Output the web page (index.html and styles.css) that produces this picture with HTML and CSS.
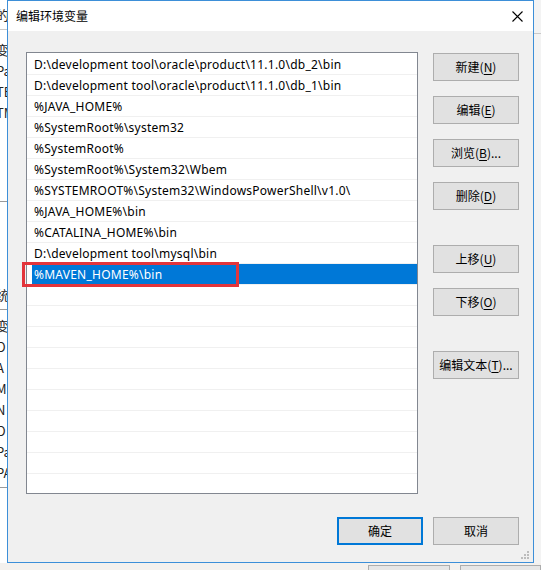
FILE: index.html
```html
<!DOCTYPE html>
<html lang="zh-CN">
<head>
<meta charset="utf-8">
<title>编辑环境变量</title>
<link rel="stylesheet" href="styles.css">
</head>
<body>
<div class="desk">
  <div class="behind-left">
    <div class="bl-inner">
      <div class="frag h30">的</div>
      <div class="frag top10">变</div>
      <div class="frag">Pa</div>
      <div class="frag">TE</div>
      <div class="frag">TM</div>
      <div class="spacer s1"></div>
      <div class="frag top82">统</div>
      <div class="rule"></div>
      <div class="frag">变</div>
      <div class="frag">O</div>
      <div class="frag">A</div>
      <div class="frag">M</div>
      <div class="frag">N</div>
      <div class="frag">O</div>
      <div class="frag">Pa</div>
      <div class="frag">PA</div>
      <div class="rule"></div>
    </div>
  </div>
  <div class="behind-right"><div class="br-line"></div></div>
  <div class="behind-bottom">
    <div class="bb-btn"></div>
    <div class="bb-btn"></div>
  </div>

  <div class="dialog">
    <div class="titlebar">
      <span class="title">编辑环境变量</span>
      <svg class="close" width="11" height="11" viewBox="0 0 11 11"><path d="M0.5 0.5 L10.5 10.5 M10.5 0.5 L0.5 10.5" stroke="#000" stroke-width="1.1" fill="none"/></svg>
    </div>
    <div class="body">
      <div class="main">
        <div class="list">
          <div class="row">D:\development tool\oracle\product\11.1.0\db_2\bin</div>
          <div class="row">D:\development tool\oracle\product\11.1.0\db_1\bin</div>
          <div class="row">%JAVA_HOME%</div>
          <div class="row">%SystemRoot%\system32</div>
          <div class="row">%SystemRoot%</div>
          <div class="row">%SystemRoot%\System32\Wbem</div>
          <div class="row">%SYSTEMROOT%\System32\WindowsPowerShell\v1.0\</div>
          <div class="row">%JAVA_HOME%\bin</div>
          <div class="row">%CATALINA_HOME%\bin</div>
          <div class="row">D:\development tool\mysql\bin</div>
          <div class="row sel">%MAVEN_HOME%\bin</div>
          <div class="row"></div><div class="row"></div><div class="row"></div>
          <div class="row"></div><div class="row"></div><div class="row"></div>
          <div class="row"></div><div class="row"></div><div class="row"></div>
          <div class="row"></div>
        </div>
        <div class="btns">
          <button class="btn">新建(<u>N</u>)</button>
          <button class="btn">编辑(<u>E</u>)</button>
          <button class="btn">浏览(<u>B</u>)...</button>
          <button class="btn">删除(<u>D</u>)</button>
          <button class="btn group">上移(<u>U</u>)</button>
          <button class="btn">下移(<u>O</u>)</button>
          <button class="btn group">编辑文本(<u>T</u>)...</button>
        </div>
      </div>
      <div class="footer">
        <button class="btn default">确定</button>
        <button class="btn">取消</button>
      </div>
    </div>
    <svg class="grip" width="8" height="8" viewBox="0 0 8 8">
      <rect x="6" y="0" width="2" height="2" fill="#bcbcbc"/>
      <rect x="3" y="3" width="2" height="2" fill="#bcbcbc"/>
      <rect x="6" y="3" width="2" height="2" fill="#bcbcbc"/>
      <rect x="0" y="6" width="2" height="2" fill="#bcbcbc"/>
      <rect x="3" y="6" width="2" height="2" fill="#bcbcbc"/>
      <rect x="6" y="6" width="2" height="2" fill="#bcbcbc"/>
    </svg>
  </div>

  <div class="mark"></div>
</div>
</body>
</html>
```
FILE: styles.css
```css
* { box-sizing: border-box; }
html, body { margin: 0; padding: 0; }
body {
  width: 541px;
  height: 570px;
  overflow: hidden;
  background: #ffffff;
  font-family: "Noto Sans", "Noto Sans CJK SC", sans-serif;
  font-size: 12px;
  color: #000;
}
.desk {
  position: relative;
  width: 541px;
  height: 570px;
}

/* window behind, left edge */
.behind-left {
  position: absolute;
  left: 0;
  top: 0;
  width: 7px;
  height: 570px;
  overflow: hidden;
  background: #fff;
}
.bl-inner {
  width: 40px;
  margin-left: -4px;
  display: flex;
  flex-direction: column;
  font-family: "Noto Sans CJK SC", sans-serif;
  font-size: 13px;
  color: #222;
}
.frag { height: 21px; line-height: 21px; white-space: nowrap; }
.frag.h30 { height: 30px; line-height: 30px; border-bottom: 1px solid #c8c8c8; }
.frag.top10 { margin-top: 9px; }
.spacer.s1 { height: 79px; border-bottom: 1px solid #9a9a9a; }
.frag.top82 { margin-top: 82px; }
.rule { height: 0; border-top: 1px solid #9a9a9a; margin: 4px 0 5px; }

.behind-right {
  position: absolute;
  left: 534px;
  top: 0;
  width: 7px;
  height: 570px;
  background: #f3f3f3;
}
.br-line { margin-top: 33px; border-top: 1px solid #c9c9c9; }

.behind-bottom {
  position: absolute;
  left: 0;
  top: 563px;
  width: 541px;
  height: 7px;
  background: #f4f1ee;
  display: flex;
  padding-left: 368px;
  gap: 10px;
}
.bb-btn {
  width: 86px;
  height: 10px;
  margin-top: 2px;
  border: 1px solid #adadad;
  background: #e6e6e6;
}

/* dialog */
.dialog {
  position: absolute;
  left: 7px;
  top: 0;
  width: 527px;
  height: 563px;
  border: 1px solid #3d8fd8;
  background: #f0f0f0;
  display: flex;
  flex-direction: column;
}
.titlebar {
  height: 30px;
  background: #fff;
  display: flex;
  align-items: center;
  justify-content: space-between;
  padding: 0 10px 0 8px;
  flex: none;
}
.title {
  font-family: "Noto Sans CJK SC", sans-serif;
  font-size: 12px;
  line-height: 1;
}
.close { display: block; margin-right: 0; }

.body {
  flex: 1;
  padding: 21px 14px 0 18px;
  display: flex;
  flex-direction: column;
}
.main {
  display: grid;
  grid-template-columns: 392px 86px;
  column-gap: 15px;
  align-items: start;
}
.list {
  height: 442px;
  border: 1px solid #828790;
  background: #fff;
  padding-top: 1px;
  overflow: hidden;
}
.row {
  height: 21px;
  line-height: 21px;
  border-bottom: 1px solid #f0f0f0;
  padding-left: 7px;
  white-space: nowrap;
  font-size: 12px;
  letter-spacing: 0.24px;
  color: #000;
}
.row.sel {
  background: linear-gradient(to right, #fff 5px, #0078d7 5px);
  color: #fff;
  border-bottom-color: #f0f0f0;
}

.btns {
  display: flex;
  flex-direction: column;
  gap: 15px;
  padding-top: 1px;
}
.btn {
  width: 86px;
  height: 28px;
  padding: 0;
  border: 1px solid #adadad;
  background: #e1e1e1;
  font-family: "Noto Sans CJK SC", sans-serif;
  font-size: 12px;
  color: #000;
  line-height: 1;
  display: flex;
  align-items: center;
  justify-content: center;
  border-radius: 0;
}
.btn u { text-underline-offset: 2px; }
.btn.group { margin-top: 20px; }

.footer {
  margin-top: 23px;
  display: flex;
  justify-content: flex-end;
  gap: 10px;
}
.btn.default {
  border: 2px solid #0078d7;
}

.grip {
  position: absolute;
  right: 4px;
  bottom: 3px;
}

.mark {
  position: absolute;
  left: 22px;
  top: 262px;
  width: 217px;
  height: 25px;
  border: 3px solid #e3353b;
}
```
